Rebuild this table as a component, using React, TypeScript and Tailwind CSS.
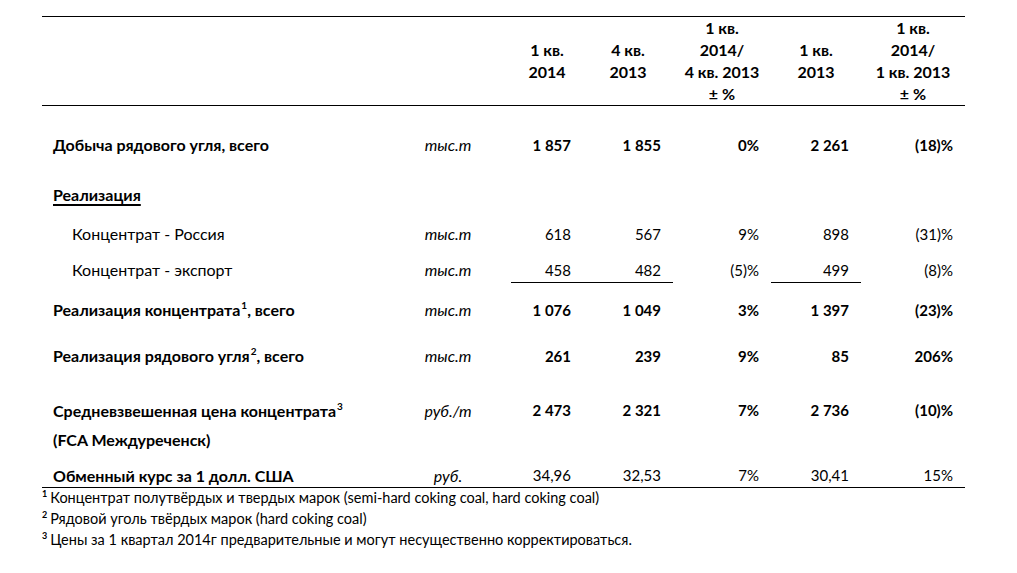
const font = { fontFamily: "Lato, 'Open Sans', 'Noto Sans', sans-serif" };

type Row = {
  label: React.ReactNode;
  unit: string;
  vals: string[];
  bold?: boolean;
  indent?: boolean;
  gap: string;
  underline?: boolean;
};

const colW = ["w-[72px]", "w-[90px]", "w-[98px]", "w-[90px]", "w-[104px]"];

function Sup({ n }: { n: string }) {
  return <sup className="text-[10px] font-bold relative -top-[7px] ml-[1px]">{n}</sup>;
}

function Cells({ vals, bold, underline, lh }: { vals: string[]; bold?: boolean; underline?: boolean; lh: string }) {
  return (
    <>
      {vals.map((v, i) => (
        <div
          key={i}
          className={`${colW[i]} pr-[12px] text-right text-[15px] ${lh} ${bold ? "font-bold" : ""} ${
            underline && (i === 0 || i === 1 || i === 3) ? "border-b border-black" : ""
          }`}
        >
          {v}
        </div>
      ))}
    </>
  );
}

const rows: Row[] = [
  { label: "Добыча рядового угля, всего", unit: "тыс.т", vals: ["1 857", "1 855", "0%", "2 261", "(18)%"], bold: true, gap: "mt-[27px]" },
  { label: <span className="underline underline-offset-[3px] decoration-[1.5px]">Реализация</span>, unit: "", vals: ["", "", "", "", ""], bold: true, gap: "mt-[26px]" },
  { label: "Концентрат - Россия", unit: "тыс.т", vals: ["618", "567", "9%", "898", "(31)%"], indent: true, gap: "mt-[15px]" },
  { label: "Концентрат - экспорт", unit: "тыс.т", vals: ["458", "482", "(5)%", "499", "(8)%"], indent: true, gap: "mt-[12px]", underline: true },
  { label: <>Реализация концентрата<Sup n="1" />, всего</>, unit: "тыс.т", vals: ["1 076", "1 049", "3%", "1 397", "(23)%"], bold: true, gap: "mt-[15px]" },
  { label: <>Реализация рядового угля<Sup n="2" />, всего</>, unit: "тыс.т", vals: ["261", "239", "9%", "85", "206%"], bold: true, gap: "mt-[22px]" },
];

export default function App() {
  return (
    <div className="w-[1017px] h-[573px] bg-white text-black overflow-hidden pt-[16px]" style={font}>
      <div className="ml-[42px] w-[923px] text-[16px]">
        {/* Header */}
        <div className="flex items-center border-y border-black h-[90px] font-bold leading-[22px] text-center">
          <div className="w-[343px]" />
          <div className="w-[126px]" />
          <div className={colW[0]}>1 кв.<br />2014</div>
          <div className={colW[1]}>4 кв.<br />2013</div>
          <div className={colW[2]}>1 кв.<br />2014/<br />4 кв. 2013<br />± %</div>
          <div className={colW[3]}>1 кв.<br />2013</div>
          <div className={colW[4]}>1 кв.<br />2014/<br />1 кв. 2013<br />± %</div>
        </div>

        {rows.map((r, i) => (
          <div key={i} className={`flex ${r.gap}`}>
            <div className={`w-[343px] leading-[24px] ${r.indent ? "pl-[30px]" : "pl-[11px]"} ${r.bold ? "font-bold" : ""}`}>
              {r.label}
            </div>
            <div className="w-[126px] text-center italic leading-[24px]">{r.unit}</div>
            <Cells vals={r.vals} bold={r.bold} underline={r.underline} lh="leading-[24px]" />
          </div>
        ))}

        {/* Price row, two lines */}
        <div className="flex mt-[28px] font-bold">
          <div className="w-[343px] pl-[11px] leading-[29px]">
            Средневзвешенная цена концентрата<Sup n="3" />
            <br />
            (FCA Междуреченск)
          </div>
          <div className="w-[126px] text-center italic font-normal leading-[29px]">руб./т</div>
          <Cells vals={["2 473", "2 321", "7%", "2 736", "(10)%"]} bold lh="leading-[29px]" />
        </div>

        {/* Exchange rate */}
        <div className="flex mt-[10px] border-b border-black">
          <div className="w-[343px] pl-[11px] leading-[23px] font-bold">Обменный курс за 1 долл. США</div>
          <div className="w-[126px] text-center italic leading-[23px]">руб.</div>
          <Cells vals={["34,96", "32,53", "7%", "30,41", "15%"]} lh="leading-[23px]" />
        </div>

        {/* Footnotes */}
        <div className="text-[14.5px] leading-[21px] -mt-[1px]">
          <div><sup className="text-[9px] font-bold mr-[3px] relative -top-[6px]">1</sup>Концентрат полутвёрдых и твердых марок (semi-hard coking coal, hard coking coal)</div>
          <div><sup className="text-[9px] font-bold mr-[3px] relative -top-[6px]">2</sup>Рядовой уголь твёрдых марок (hard coking coal)</div>
          <div><sup className="text-[9px] font-bold mr-[3px] relative -top-[6px]">3</sup>Цены за 1 квартал 2014г предварительные и могут несущественно корректироваться.</div>
        </div>
      </div>
    </div>
  );
}
